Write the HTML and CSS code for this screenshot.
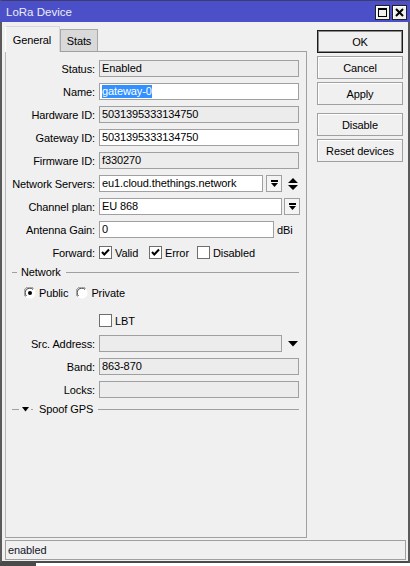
FILE: index.html
```html
<!DOCTYPE html>
<html>
<head>
<meta charset="utf-8">
<link rel="stylesheet" href="styles.css">
</head>
<body>
<div class="window">
  <div class="titlebar">
    <span class="title">LoRa Device</span>
    <div class="tbtns">
      <span class="tbtn"><svg width="13" height="13" viewBox="0 0 13 13"><rect x="2.5" y="2.5" width="8" height="8" fill="none" stroke="#000" stroke-width="1"/><rect x="2" y="2" width="9" height="2" fill="#000"/></svg></span>
      <span class="tbtn"><svg width="13" height="13" viewBox="0 0 13 13"><path d="M3 3 L10 10 M10 3 L3 10" stroke="#000" stroke-width="2"/></svg></span>
    </div>
  </div>
  <div class="content">
    <div class="left">
      <div class="tabs">
        <div class="tab active">General</div>
        <div class="tab">Stats</div>
      </div>
      <div class="panel">
        <div class="row"><span class="lbl">Status:</span><span class="field ro w200">Enabled</span></div>
        <div class="row"><span class="lbl">Name:</span><span class="field w200"><span class="sel">gateway-0</span></span></div>
        <div class="row"><span class="lbl">Hardware ID:</span><span class="field ro w200">5031395333134750</span></div>
        <div class="row"><span class="lbl">Gateway ID:</span><span class="field w200">5031395333134750</span></div>
        <div class="row"><span class="lbl">Firmware ID:</span><span class="field ro w200">f330270</span></div>
        <div class="row">
          <span class="lbl">Network Servers:</span><span class="field w164">eu1.cloud.thethings.network</span>
          <span class="ddbtn gap3"><svg width="9" height="9" viewBox="0 0 9 9"><rect x="1" y="1" width="7" height="2" fill="#000"/><path d="M1 4 H8 L4.5 8 Z" fill="#000"/></svg></span>
          <span class="updown"><svg width="10" height="14" viewBox="0 0 10 14"><path d="M0 6 L5 1 L10 6 Z M0 8 H10 L5 13 Z" fill="#000"/></svg></span>
        </div>
        <div class="row">
          <span class="lbl">Channel plan:</span><span class="field w183">EU 868</span>
          <span class="ddbtn gap2"><svg width="9" height="9" viewBox="0 0 9 9"><rect x="1" y="1" width="7" height="2" fill="#000"/><path d="M1 4 H8 L4.5 8 Z" fill="#000"/></svg></span>
        </div>
        <div class="row"><span class="lbl">Antenna Gain:</span><span class="field w175">0</span><span class="unit">dBi</span></div>
        <div class="row">
          <span class="lbl">Forward:</span>
          <span class="chk-item w50"><span class="cb"><svg width="11" height="11" viewBox="0 0 11 11"><path d="M2 5 L4.3 7.5 L9 2.5" fill="none" stroke="#000" stroke-width="2"/></svg></span>Valid</span>
          <span class="chk-item w48"><span class="cb"><svg width="11" height="11" viewBox="0 0 11 11"><path d="M2 5 L4.3 7.5 L9 2.5" fill="none" stroke="#000" stroke-width="2"/></svg></span>Error</span>
          <span class="chk-item"><span class="cb"></span>Disabled</span>
        </div>
        <div class="sect net">
          <span class="dash d5"></span><span class="stext">Network</span><span class="line"></span>
        </div>
        <div class="row radios">
          <span class="radio"><svg width="12" height="12" viewBox="0 0 12 12"><circle cx="6" cy="6" r="5.5" fill="#fff"/><path d="M1.5 9.5 A5 5 0 0 1 9.5 1.5" fill="none" stroke="#808080" stroke-width="1"/><path d="M2.5 9 A4 4 0 0 1 9 2.5" fill="none" stroke="#404040" stroke-width="1"/><circle cx="6" cy="6" r="2" fill="#000"/></svg>Public</span>
          <span class="radio"><svg width="12" height="12" viewBox="0 0 12 12"><circle cx="6" cy="6" r="5.5" fill="#fff"/><path d="M1.5 9.5 A5 5 0 0 1 9.5 1.5" fill="none" stroke="#808080" stroke-width="1"/><path d="M2.5 9 A4 4 0 0 1 9 2.5" fill="none" stroke="#404040" stroke-width="1"/></svg>Private</span>
        </div>
        <div class="row lbt"><span class="lbl"></span><span class="chk-item"><span class="cb"></span>LBT</span></div>
        <div class="row"><span class="lbl">Src. Address:</span><span class="field ro w183"></span><span class="arrow"><svg width="10" height="6" viewBox="0 0 10 6"><path d="M0 0 H10 L5 5.5 Z" fill="#000"/></svg></span></div>
        <div class="row"><span class="lbl">Band:</span><span class="field ro w200">863-870</span></div>
        <div class="row"><span class="lbl">Locks:</span><span class="field ro w200"></span></div>
        <div class="sect spoof">
          <span class="dash d7"></span>
          <svg class="tri" width="7" height="5" viewBox="0 0 7 5"><path d="M0 0 H7 L3.5 4.5 Z" fill="#000"/></svg>
          <span class="dash d2"></span>
          <span class="stext">Spoof GPS</span><span class="line"></span>
        </div>
      </div>
    </div>
    <div class="side">
      <div class="btn default">OK</div>
      <div class="btn">Cancel</div>
      <div class="btn">Apply</div>
      <div class="btn sep">Disable</div>
      <div class="btn">Reset devices</div>
    </div>
  </div>
  <div class="status">enabled</div>
</div>
<div class="under"></div>
</body>
</html>
```

FILE: styles.css
```css
html, body {
  margin: 0;
  padding: 0;
  background: #ffffff;
}
body {
  font-family: "Liberation Sans", Arial, sans-serif;
  font-size: 11px;
  letter-spacing: -0.1px;
  color: #000;
}
.window {
  width: 410px;
  height: 563px;
  box-sizing: border-box;
  border-left: 2px solid #5a5a5a;
  border-right: 2px solid #5a5a5a;
  border-bottom: 2px solid #4a4a4a;
  border-top: 1px solid #3c3c6e;
  background: #f0f0f0;
  display: flex;
  flex-direction: column;
}
.titlebar {
  height: 21px;
  flex: none;
  background: #4b50c9;
  display: flex;
  align-items: center;
  padding-left: 6px;
  margin: 0 -2px;
  padding-right: 3px;
}
.title {
  color: #ececf6;
  font-size: 11.5px;
  letter-spacing: 0;
}
.tbtns {
  margin-left: auto;
  display: flex;
  gap: 2px;
  margin-top: 1px;
}
.tbtn {
  width: 15px;
  height: 15px;
  box-sizing: border-box;
  border: 1px solid #202020;
  background: #f0f0f0;
  display: flex;
  align-items: center;
  justify-content: center;
  box-shadow: inset 1px 1px 0 #fff;
}
.content {
  display: flex;
  flex: 1;
  min-height: 0;
}
.left {
  padding-left: 3px;
  padding-top: 4px;
  width: 302px;
}
.tabs {
  display: flex;
  align-items: flex-end;
  height: 25px;
}
.tab {
  box-sizing: border-box;
  height: 22px;
  width: 38px;
  border: 1px solid #a8a8a8;
  border-bottom: none;
  background: #d9d9d9;
  display: flex;
  align-items: center;
  justify-content: center;
  padding-top: 1px;
}
.tab.active {
  width: 55px;
  height: 26px;
  background: #f0f0f0;
  border-color: #d8d8d8;
  border-left-color: #ffffff;
  position: relative;
  z-index: 1;
  margin-bottom: -1px;
  padding-top: 0;
  padding-right: 1px;
}
.panel {
  box-sizing: border-box;
  height: 487px;
  border: 1px solid #a0a0a0;
  border-left-color: #b8b8b8;
  padding-top: 8px;
}
.row {
  display: flex;
  align-items: center;
  height: 17px;
  margin-bottom: 6px;
}
.lbl {
  width: 93px;
  box-sizing: border-box;
  padding-right: 4px;
  text-align: right;
  flex: none;
  white-space: nowrap;
}
.field {
  box-sizing: border-box;
  height: 17px;
  border: 1px solid #a0a0a0;
  background: #ffffff;
  padding-left: 2px;
  line-height: 15px;
  white-space: nowrap;
  overflow: hidden;
  flex: none;
}
.field.ro {
  background: #ececec;
}
.w200 { width: 200px; }
.w164 { width: 164px; }
.w183 { width: 183px; }
.w175 { width: 175px; }
.sel {
  background: #3390ff;
  color: #fff;
  display: inline-block;
  line-height: 13px;
  margin-top: 1px;
  vertical-align: top;
}
.ddbtn {
  box-sizing: border-box;
  width: 16px;
  height: 17px;
  border: 1px solid #a0a0a0;
  background: #f4f4f4;
  display: flex;
  align-items: center;
  justify-content: center;
  flex: none;
}
.gap3 { margin-left: 3px; }
.gap2 { margin-left: 2px; }
.updown {
  margin-left: 6px;
  display: flex;
  align-items: center;
}
.arrow {
  margin-left: 6px;
  display: flex;
  align-items: center;
  margin-top: 1px;
}
.unit {
  margin-left: 3px;
}
.chk-item {
  display: flex;
  align-items: center;
  flex: none;
}
.w50 { width: 50px; }
.w48 { width: 48px; }
.cb {
  box-sizing: border-box;
  width: 13px;
  height: 13px;
  border: 1px solid #6e6e6e;
  background: #fff;
  margin-right: 3px;
  display: flex;
  align-items: center;
  justify-content: center;
}
.sect {
  display: flex;
  align-items: center;
  height: 12px;
  margin-bottom: 6px;
  padding-left: 6px;
  padding-right: 7px;
}
.sect.net {
  height: 10px;
  margin-bottom: 7px;
}
.dash {
  height: 1px;
  background: #a0a0a0;
  flex: none;
}
.d5 { width: 5px; margin-right: 4px; }
.d7 { width: 7px; margin-right: 3px; }
.d2 { width: 2px; margin-left: 2px; margin-right: 6px; }
.tri { flex: none; }
.stext {
  margin-right: 5px;
  white-space: nowrap;
}
.line {
  flex: 1;
  height: 1px;
  background: #a0a0a0;
}
.radios {
  padding-left: 18px;
  margin-bottom: 11px;
}
.radio {
  display: flex;
  align-items: center;
}
.radio svg {
  margin-right: 3px;
}
.radio + .radio {
  margin-left: 8px;
}
.lbt {
  margin-bottom: 6px;
}
.spoof {
  margin-top: -1px;
}
.side {
  margin-left: auto;
  margin-right: 5px;
  width: 86px;
  padding-top: 8px;
  display: flex;
  flex-direction: column;
}
.btn {
  box-sizing: border-box;
  height: 23px;
  border: 1px solid #a0a0a0;
  background: #f0f0f0;
  display: flex;
  align-items: center;
  justify-content: center;
  margin-bottom: 3px;
  box-shadow: inset 1px 1px 0 #ffffff;
}
.btn.default {
  border: 1px solid #1a1a1a;
  box-shadow: inset 0 0 0 1px #8a8a8a;
}
.btn.sep {
  margin-top: 5px;
}
.status {
  box-sizing: border-box;
  height: 20px;
  margin: 3px 2px 1px 3px;
  border: 1px solid #a0a0a0;
  padding-left: 2px;
  line-height: 18px;
  color: #141428;
  flex: none;
}
.under {
  width: 36px;
  height: 3px;
  background: #4a4a4a;
}
```
